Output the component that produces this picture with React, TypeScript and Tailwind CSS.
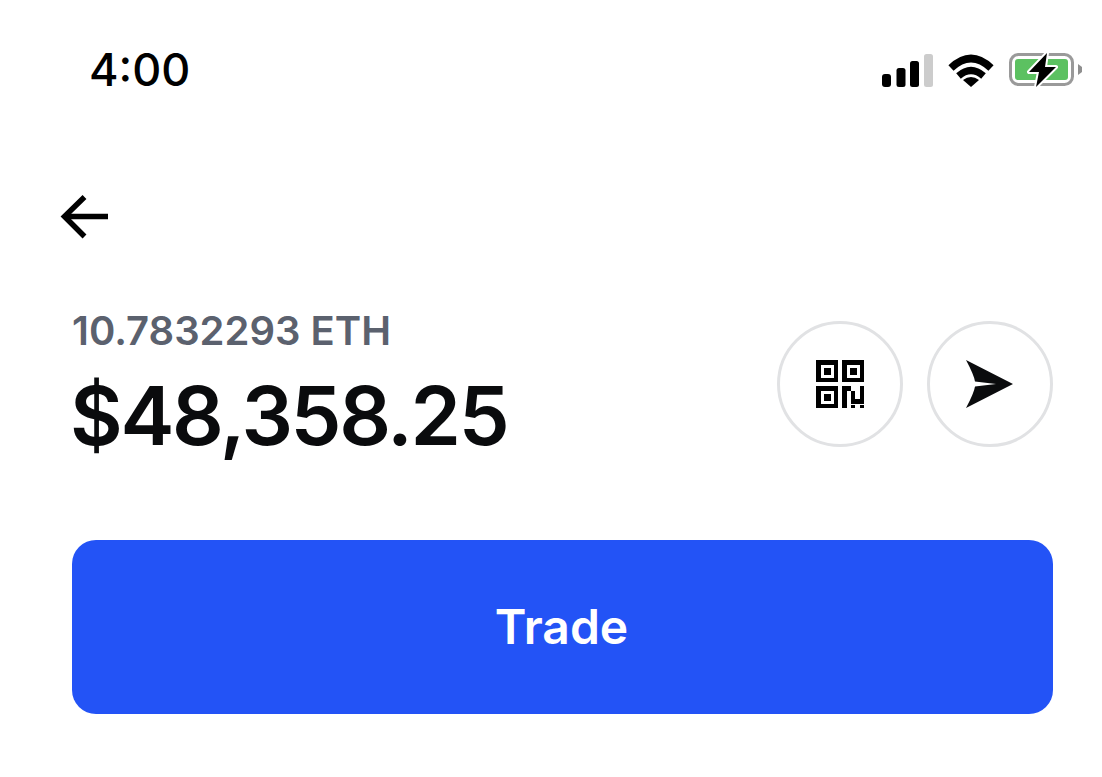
function BackArrow() {
  return (
    <svg width="50" height="46" viewBox="0 0 50 46" fill="none" stroke="#000" strokeWidth="5.500">
      <path d="M48 22.500 H4" />
      <path d="M24.500 3 L4.500 22.500 L24.500 42.500" />
    </svg>
  );
}

function SignalIcon() {
  return (
    <svg width="51" height="33" viewBox="0 0 51 33">
      <rect x="0" y="20" width="9" height="13" rx="3" fill="#000" />
      <rect x="14.500" y="14" width="9" height="19" rx="2.500" fill="#000" />
      <rect x="28" y="7" width="9" height="26" rx="2.500" fill="#000" />
      <rect x="42" y="0" width="9" height="33" rx="2.500" fill="#ccc" />
    </svg>
  );
}

function WifiIcon() {
  return (
    <svg width="46" height="33" viewBox="0 0 46 33" fill="none">
      <path d="M3 14 Q23 -5 43 14" stroke="#000" strokeWidth="7.500" />
      <path d="M10.500 22 Q23 11 35.500 22" stroke="#000" strokeWidth="7" />
      <path d="M15 26 Q23 20 31 26 L23 33 Z" fill="#000" />
    </svg>
  );
}

function BatteryIcon() {
  return (
    <svg width="74" height="36" viewBox="0 0 74 36" fill="none">
      <rect x="1.500" y="2.500" width="62" height="30" rx="8" stroke="#9a9a9a" strokeWidth="3" />
      <rect x="6" y="7" width="53" height="21" rx="3" fill="#5cc161" />
      <path d="M69 12 L73 15 V20 L69 23 Z" fill="#8f8f8f" />
      <path
        d="M38 1 L20 20 H30 L27 35 L47 15 H36 Z"
        fill="#000"
        stroke="#fff"
        strokeWidth="4"
        strokeLinejoin="round"
        paintOrder="stroke"
      />
    </svg>
  );
}

function QrIcon() {
  const finder = (x: number, y: number) => (
    <g key={`${x}-${y}`}>
      <rect x={x} y={y} width="22" height="22" fill="#000" />
      <rect x={x + 4.500} y={y + 4.500} width="13" height="13" fill="#fff" />
      <rect x={x + 7.500} y={y + 7.500} width="7" height="7" fill="#000" />
    </g>
  );
  return (
    <svg width="48" height="48" viewBox="0 0 48 48" shapeRendering="crispEdges">
      {finder(0, 0)}
      {finder(26, 0)}
      {finder(0, 26)}
      <path
        d="M26 26 H35 V30.500 H30.500 V48 H26 Z M35 30.500 H39 V39 H43.500 V26 H48 V43.500 H35 Z M35 45 H39 V48 H35 Z M44 45 H48 V48 H44 Z"
        fill="#000"
      />
    </svg>
  );
}

function SendIcon() {
  return (
    <svg width="48" height="48" viewBox="0 0 48 48">
      <path d="M0 0 L47 24 L0 48 Q8 33 9 26.500 L30 24 L9 21.500 Q8 15 0 0 Z" fill="#0a0b0d" />
    </svg>
  );
}

function CircleButton({ children }: { children: React.ReactNode }) {
  return (
    <button className="flex h-[126px] w-[126px] items-center justify-center rounded-full border-[3px] border-[#e1e2e4] bg-white">
      {children}
    </button>
  );
}

export default function App() {
  return (
    <main className="flex h-[777px] w-[1102px] flex-col overflow-hidden bg-white font-['Inter',sans-serif] text-[#0a0b0d]">
      <div className="flex items-center justify-between pl-[89px] pr-[19px] pt-[44px]">
        <span className="text-[45px] font-medium leading-[52px] text-black">4:00</span>
        <div className="flex items-center gap-[15px]">
          <SignalIcon />
          <WifiIcon />
          <BatteryIcon />
        </div>
      </div>

      <div className="pl-[60px] pt-[98px]">
        <BackArrow />
      </div>

      <div className="mt-[67px] flex items-center justify-between pl-[72px] pr-[49px]">
        <div>
          <p className="text-[40px] font-semibold leading-[48px] text-[#5b616e]">10.7832293 ETH</p>
          <p className="-ml-[2px] mt-[15px] text-[81px] font-semibold leading-[92px] tracking-[-2.300px]">$48,358.25</p>
        </div>
        <div className="mb-[2px] flex gap-[24px]">
          <CircleButton>
            <QrIcon />
          </CircleButton>
          <CircleButton>
            <SendIcon />
          </CircleButton>
        </div>
      </div>

      <div className="mt-[78px] pl-[72px] pr-[49px]">
        <button className="flex h-[174px] w-full items-center justify-center rounded-[24px] bg-[#2353f6] pr-[2px] text-[48px] font-semibold text-white">
          Trade
        </button>
      </div>
    </main>
  );
}
